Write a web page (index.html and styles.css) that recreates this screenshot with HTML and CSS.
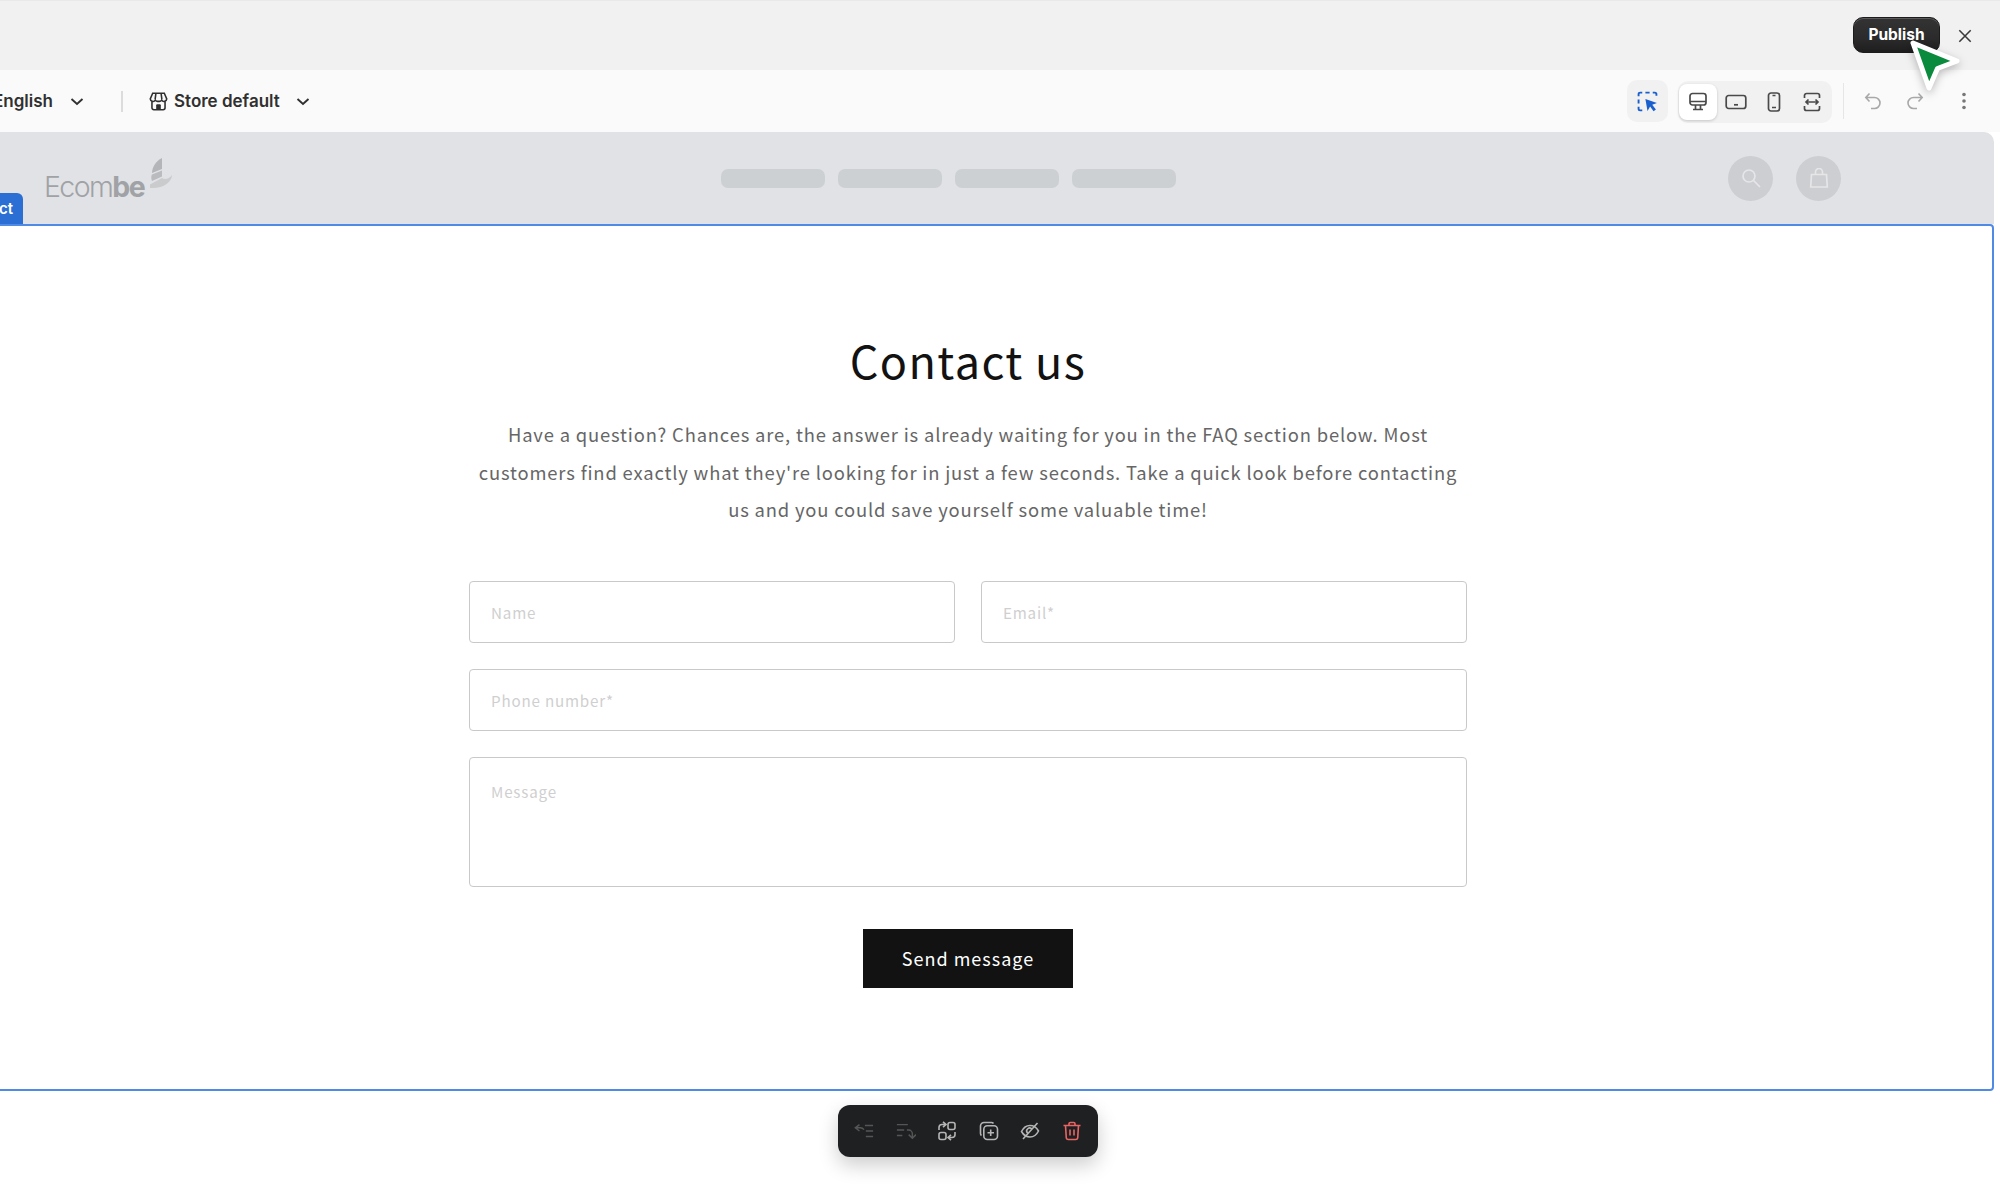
FILE: index.html
```html
<!DOCTYPE html>
<html lang="en">
<head>
<meta charset="utf-8">
<title>Contact us</title>
<link rel="stylesheet" href="styles.css">
</head>
<body>
<div class="app">
  <div class="topbar">
    <button class="publish">Publish</button>
    <svg class="close" viewBox="0 0 16 16"><path d="M1.5 1.5l13 13M14.5 1.5l-13 13"/></svg>
  </div>
  <div class="toolbar">
    <div class="tool-left">
      <span class="tool-text">English</span>
      <svg class="chev chev-a" viewBox="0 0 14 8"><path d="M1.5 1.5L7 6.5l5.5-5"/></svg>
      <span class="vsep"></span>
      <svg class="store" viewBox="0 0 18 18"><path d="M3.5 1.2h11l2.300 5.300a2.600 2.600 0 0 1-4.800 1.200 2.900 2.900 0 0 1-3 1.100 2.900 2.900 0 0 1-3-1.100A2.600 2.600 0 0 1 1.200 6.500zM6.500 1.500L5.800 7M11.500 1.500L12.200 7M2.800 8.800V15a1.800 1.800 0 0 0 1.800 1.800h8.800a1.800 1.800 0 0 0 1.800-1.800V8.800"/><path class="store-door" d="M6.800 16.800V12.500a1 1 0 0 1 1-1h2.400a1 1 0 0 1 1 1v4.300z"/></svg>
      <span class="tool-text store-name">Store default</span>
      <svg class="chev chev-b" viewBox="0 0 14 8"><path d="M1.5 1.5L7 6.5l5.500-5"/></svg>
    </div>
    <div class="tool-right">
      <div class="select-tool">
        <svg class="ic-sel" viewBox="0 0 20 20"><path class="dash" d="M1.500 5V3a1.500 1.500 0 0 1 1.500-1.500h2M8 1.500h4M15 1.500h2A1.500 1.500 0 0 1 18.500 3v1.500M1.500 8v4M1.500 15v2A1.500 1.500 0 0 0 3 18.500h2"/><path class="arrow" d="M8 7.500l11 4-4.500 1.500 3.500 4.500-2.200 1.800-3.300-4.500L10 19z"/></svg>
      </div>
      <div class="devices">
        <span class="dev active"><svg class="ic20 gray" viewBox="0 0 20 20"><rect x="2" y="1.500" width="16" height="11.500" rx="2.500"/><path d="M2 9.500h16M7.500 13v4M12.500 13v4M5 17.500h10"/></svg></span>
        <span class="dev"><svg class="ic20w gray" viewBox="0 0 22 16"><rect x="1.200" y="1.500" width="19.600" height="13" rx="2.500"/><path d="M9 10.800h4"/></svg></span>
        <span class="dev"><svg class="ic20 gray" viewBox="0 0 20 20"><rect x="4.500" y="1" width="11" height="18" rx="2.500"/><path d="M8.500 3.500h3M8 15.500h4"/></svg></span>
        <span class="dev"><svg class="ic20 gray" viewBox="0 0 20 20"><path d="M2.500 6V3.500a2 2 0 0 1 2-2h11a2 2 0 0 1 2 2V6M2.500 14v2.500a2 2 0 0 0 2 2h11a2 2 0 0 0 2-2V14M4 10h12M6.500 7.500L4 10l2.500 2.500M13.500 7.500L16 10l-2.500 2.500"/></svg></span>
      </div>
      <span class="vsep2"></span>
      <svg class="hist hist-u" viewBox="0 0 18 18"><path d="M5.500 1.500L1.800 5.500l3.700 4M2 5.500h8.500a5 5 0 0 1 0 11H7"/></svg>
      <svg class="hist hist-r" viewBox="0 0 18 18"><path d="M12.500 1.500l3.700 4-3.700 4M16 5.500H7.500a5 5 0 0 0 0 11H11"/></svg>
      <svg class="kebab" viewBox="0 0 4 18"><circle cx="2" cy="2.500" r="1.800"/><circle cx="2" cy="9" r="1.800"/><circle cx="2" cy="15.500" r="1.800"/></svg>
    </div>
  </div>
  <div class="preview">
    <div class="store-header">
      <div class="logo">
        <span class="logo-text">Ecom<b>be</b></span>
        <svg class="logo-mark" viewBox="0 0 24 34"><path d="M13 1v11L3 16C3 10 7 4 13 1z" fill="#b3b5b8"/><path d="M13 13.500v6L3 24c-1-2-1-5 0-6.500z" fill="#b9bbbe"/><path d="M13 21c3 2 7 1 10-3 0 7-9 14-22 13v-3.500z" fill="#c9cbcd"/></svg>
      </div>
      <div class="skeleton-nav">
        <span class="skel"></span><span class="skel"></span><span class="skel"></span><span class="skel"></span>
      </div>
      <div class="circles">
        <span class="circle"><svg class="ic-c" viewBox="0 0 20 20"><circle cx="8" cy="8" r="6"/><path d="M12.500 12.500L19 19"/></svg></span>
        <span class="circle"><svg class="ic-c" viewBox="0 0 20 20"><path d="M2.500 6.500h15l.8 12.500H1.700zM6.500 6.500V4a3.500 3.500 0 0 1 7 0v2.500"/></svg></span>
      </div>
    </div>
    <section class="contact">
      <span class="sec-tag">Contact</span>
      <h1 class="title">Contact us</h1>
      <p class="lead">Have a question? Chances are, the answer is already waiting for you in the FAQ section below. Most customers find exactly what they're looking for in just a few seconds. Take a quick look before contacting us and you could save yourself some valuable time!</p>
      <form class="form">
        <div class="row">
          <input class="field" placeholder="Name">
          <input class="field" placeholder="Email*">
        </div>
        <input class="field" placeholder="Phone number*">
        <textarea class="field area" placeholder="Message"></textarea>
        <button type="button" class="send">Send message</button>
      </form>
    </section>
    <div class="section-bar">
      <svg class="bi dim" viewBox="0 0 22 20"><path d="M6 3L1.500 6.500 6 10M1.500 6.500H7a5 5 0 0 1 4 2M12 4h9M13 10h8M13 16h8"/></svg>
      <svg class="bi dim" viewBox="0 0 22 20"><path d="M1 3h12M1 9h8M1 15h6M12 9h2a4 4 0 0 1 4 4v4M14 14l4 4 4-4"/></svg>
      <svg class="bi" viewBox="0 0 20 20"><rect x="11" y="1.500" width="7" height="7" rx="2"/><rect x="2" y="11.500" width="7" height="7" rx="2"/><path d="M2 9V6.500a3 3 0 0 1 3-3h3.500M6 .8l3 2.700-3 2.700M18 11v2.500a3 3 0 0 1-3 3h-3.500M14 13.800l-3 2.700 3 2.700"/></svg>
      <svg class="bi" viewBox="0 0 20 20"><path d="M14.500 2.500A2.500 2.500 0 0 0 12.500 1.500H5A3.500 3.500 0 0 0 1.500 5v7.500a2.500 2.500 0 0 0 1 2"/><rect x="4.800" y="4.800" width="13.700" height="13.700" rx="3.500"/><path d="M11.700 8.500v6.500M8.500 11.700H15"/></svg>
      <svg class="bi" viewBox="0 0 20 20"><path d="M1.500 10.500C3.500 6.500 6.500 4.500 10 4.500s6.500 2 8.500 5.500c-2 4-5 6-8.500 6s-6.500-2-8.500-5.500zM7.500 12a3 3 0 0 1 4.500-4M3 18L17.500 2"/></svg>
      <svg class="bi red" viewBox="0 0 20 20"><path d="M1.500 4.500h17M7 4.500V2.800A1.300 1.300 0 0 1 8.300 1.500h3.400A1.300 1.300 0 0 1 13 2.800v1.700M3.500 4.500l.8 12.500a2 2 0 0 0 2 1.500h7.400a2 2 0 0 0 2-1.500l.8-12.500M8 8.500v6M12 8.500v6"/></svg>
    </div>
  </div>
</div>
<svg class="cursor" viewBox="0 0 60 60"><path d="M8 5l44 18-19.500 7.500L24 50z"/></svg>
</body>
</html>
```

FILE: styles.css
```css
* { box-sizing: border-box; }
html, body { margin: 0; padding: 0; height: 100%; }
body { width: 2000px; height: 1200px; overflow: hidden; position: relative; background: #fff; font-family: "Inter", "Liberation Sans", sans-serif; }
.app { width: 2058px; margin-left: -58px; height: 1200px; display: flex; flex-direction: column; }

.topbar { height: 70px; background: #f1f1f1; border-top: 1px solid #e9e9e9; display: flex; align-items: center; justify-content: flex-end; padding: 0 28px 0 0; gap: 18px; flex-shrink: 0; }
.publish { width: 87px; height: 36px; border-radius: 10px; border: 1px solid #1c1c1c; background: linear-gradient(#333 0%, #2b2b2b 60%, #1e1e1e 100%); box-shadow: inset 0 1px 0 #5a5a5a; color: #fff; font: 700 15.500px "Inter", sans-serif; padding: 0; margin-top: -2px; }
.close { width: 14px; height: 14px; fill: none; stroke: #3a3a3a; stroke-width: 1.800; margin-top: 1px; }

.toolbar { height: 62px; background: #fafafa; display: flex; align-items: center; justify-content: space-between; padding: 0 34px 0 0; flex-shrink: 0; }
.tool-left { display: flex; align-items: center; margin-left: 51px; }
.tool-text { font-size: 17px; font-weight: 600; color: #303030; }
.chev { width: 14px; height: 9px; fill: none; stroke: #303030; stroke-width: 1.900; margin-left: 17px; }
.chev-b { margin-left: 16px; }
.vsep { width: 2px; height: 21px; background: #dcdcdc; margin: 0 26px 0 37px; }
.store { width: 19px; height: 19px; fill: none; stroke: #303030; stroke-width: 1.500; margin-right: 6px; }
.store-door { fill: #303030; stroke: none; }
.tool-right { display: flex; align-items: center; }
.select-tool { width: 41px; height: 42px; border-radius: 10px; background: #f1f1f1; display: flex; align-items: center; justify-content: center; margin-right: 10px; }
.ic-sel { width: 21px; height: 21px; fill: none; margin-left: -1px; }
.ic20 { width: 20px; height: 20px; fill: none; stroke-width: 1.700; }
.ic20w { width: 22px; height: 16px; fill: none; stroke-width: 1.700; }
.gray { stroke: #4a4a4a; }
.dash { stroke: #1a5fd0; stroke-width: 1.800; fill: none; }
.arrow { fill: #1a5fd0; stroke: none; }
.devices { width: 154px; height: 42px; border-radius: 10px; background: #f1f1f1; display: flex; align-items: center; justify-content: space-between; padding: 0 1px; margin-top: 1px; }
.dev { width: 38px; height: 36px; display: flex; align-items: center; justify-content: center; border-radius: 8px; }
.dev.active { background: #fff; box-shadow: 0 1px 3px rgba(0,0,0,.18); }
.vsep2 { width: 1px; height: 36px; background: #e6e6e6; margin: 0 20px 0 11px; }
.hist { width: 18px; height: 18px; fill: none; stroke: #a8a8a8; stroke-width: 1.600; }
.hist-r { margin-left: 24px; }
.kebab { width: 4px; height: 18px; fill: #777; margin-left: 38px; }

.preview { flex: 1; width: 2052px; display: flex; flex-direction: column; background: #fff; }
.store-header { height: 92px; background: #e1e2e5; border-radius: 0 10px 0 0; display: flex; align-items: center; padding: 0 153px 0 102px; flex-shrink: 0; }
.logo { display: flex; align-items: flex-start; width: 129px; height: 44px; margin-top: 2px; }
.logo-text { font: 300 28.500px/1 "Inter", sans-serif; letter-spacing: -1.600px; color: #a0a2a6; margin-top: 16px; }
.logo-text b { font-weight: 700; }
.logo-mark { width: 24px; height: 34px; margin-left: 5px; margin-top: 0; flex-shrink: 0; }
.skeleton-nav { display: flex; gap: 13px; margin-left: 548px; }
.skel { width: 104px; height: 19px; border-radius: 7px; background: #cdd0d3; }
.circles { display: flex; gap: 23px; margin-left: auto; }
.circle { width: 45px; height: 45px; border-radius: 50%; background: #cdced1; display: flex; align-items: center; justify-content: center; }
.ic-c { width: 20px; height: 20px; fill: none; stroke: #e6e6e8; stroke-width: 1.700; }

.contact { position: relative; height: 867px; border: 2px solid #4f8ae6; border-radius: 0 4px 4px 0; padding-top: 111px; display: flex; flex-direction: column; align-items: center; font-family: "Noto Sans CJK JP", sans-serif; flex-shrink: 0; }
.sec-tag { position: absolute; left: -2px; top: -33px; width: 81px; height: 31px; background: #2b6fd4; color: #fff; border-radius: 0 6px 0 0; font: 600 15px/31px "Inter", sans-serif; text-align: right; padding-right: 10px; }
.title { margin: 0; font-size: 45px; line-height: 1; font-weight: 400; letter-spacing: 1.400px; color: #121212; }
.lead { width: 998px; margin: 34px 0 0; font-size: 18.400px; line-height: 37.500px; letter-spacing: .83px; color: #666; text-align: center; }
.form { width: 998px; margin-top: 52px; display: flex; flex-direction: column; gap: 26px; align-items: center; }
.row { width: 100%; display: flex; gap: 26px; }
.field { width: 100%; height: 62px; border: 1px solid #c9c9c9; border-radius: 4px; padding: 0 21px; font-family: "Noto Sans CJK JP", sans-serif; font-size: 15.200px; letter-spacing: .8px; background: #fff; outline: none; display: block; resize: none; }
.row .field { flex: 1; width: auto; }
.field::placeholder { color: #cfcfcf; opacity: 1; }
.area { height: 130px; padding-top: 22px; }
.send { width: 210px; height: 59px; background: #121212; color: #fff; border: 0; font-family: "Noto Sans CJK JP", sans-serif; font-size: 18px; letter-spacing: 1px; margin-top: 16px; padding: 0; }

.section-bar { width: 260px; height: 52px; margin: 14px auto 0; background: #1f2022; border-radius: 12px; box-shadow: 0 8px 20px rgba(0,0,0,.2); display: flex; align-items: center; justify-content: space-between; padding: 0 16px 0 16px; flex-shrink: 0; }
.bi { width: 20px; height: 20px; fill: none; stroke: #b5b5b5; stroke-width: 1.600; }
.bi.dim { stroke: #555; }
.bi.red { stroke: #ea6464; }

.cursor { position: absolute; left: 1905px; top: 38px; width: 60px; height: 60px; overflow: visible; filter: drop-shadow(0 3px 4px rgba(0,0,0,.25)); }
.cursor path { fill: #0a8a3c; stroke: #fff; stroke-width: 5px; stroke-linejoin: round; }
```
